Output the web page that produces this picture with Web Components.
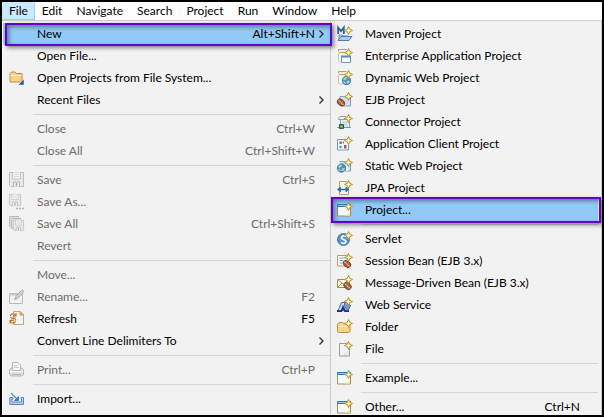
<!DOCTYPE html>
<html lang="en">
<head>
<meta charset="UTF-8">
<meta name="viewport" content="width=device-width, initial-scale=1">
<title>File menu</title>
<style>
    body {
        margin: 0;
        font-family: Lato, "Open Sans", sans-serif;
        font-size: 12px;
        line-height: 18px;
        color: #000;
    }
</style>
</head>
<body>
<app-frame>
    <menu-bar slot="bar">
        <menu-tab active>File</menu-tab>
        <menu-tab>Edit</menu-tab>
        <menu-tab>Navigate</menu-tab>
        <menu-tab>Search</menu-tab>
        <menu-tab>Project</menu-tab>
        <menu-tab>Run</menu-tab>
        <menu-tab>Window</menu-tab>
        <menu-tab>Help</menu-tab>
    </menu-bar>

    <menu-panel>
        <menu-entry keys="Alt+Shift+N" submenu marked>New</menu-entry>
        <menu-entry>Open File...</menu-entry>
        <menu-entry icon="openProject">Open Projects from File System...</menu-entry>
        <menu-entry submenu>Recent Files</menu-entry>
        <menu-divider></menu-divider>
        <menu-entry keys="Ctrl+W" disabled>Close</menu-entry>
        <menu-entry keys="Ctrl+Shift+W" disabled>Close All</menu-entry>
        <menu-divider></menu-divider>
        <menu-entry icon="save" keys="Ctrl+S" disabled>Save</menu-entry>
        <menu-entry icon="saveAs" disabled>Save As...</menu-entry>
        <menu-entry icon="saveAll" keys="Ctrl+Shift+S" disabled>Save All</menu-entry>
        <menu-entry disabled>Revert</menu-entry>
        <menu-divider></menu-divider>
        <menu-entry disabled>Move...</menu-entry>
        <menu-entry icon="rename" keys="F2" disabled>Rename...</menu-entry>
        <menu-entry icon="refresh" keys="F5">Refresh</menu-entry>
        <menu-entry submenu>Convert Line Delimiters To</menu-entry>
        <menu-divider></menu-divider>
        <menu-entry icon="print" keys="Ctrl+P" disabled>Print...</menu-entry>
        <menu-divider></menu-divider>
        <menu-entry icon="import">Import...</menu-entry>
    </menu-panel>

    <menu-panel nested>
        <menu-entry icon="maven">Maven Project</menu-entry>
        <menu-entry icon="enterprise">Enterprise Application Project</menu-entry>
        <menu-entry icon="dynamicWeb">Dynamic Web Project</menu-entry>
        <menu-entry icon="ejb">EJB Project</menu-entry>
        <menu-entry icon="connector">Connector Project</menu-entry>
        <menu-entry icon="appClient">Application Client Project</menu-entry>
        <menu-entry icon="staticWeb">Static Web Project</menu-entry>
        <menu-entry icon="jpa">JPA Project</menu-entry>
        <menu-entry icon="wizard" marked>Project...</menu-entry>
        <menu-divider></menu-divider>
        <menu-entry icon="servlet">Servlet</menu-entry>
        <menu-entry icon="sessionBean">Session Bean (EJB 3.x)</menu-entry>
        <menu-entry icon="messageBean">Message-Driven Bean (EJB 3.x)</menu-entry>
        <menu-entry icon="webService">Web Service</menu-entry>
        <menu-entry icon="folder">Folder</menu-entry>
        <menu-entry icon="file">File</menu-entry>
        <menu-divider></menu-divider>
        <menu-entry icon="wizard">Example...</menu-entry>
        <menu-divider></menu-divider>
        <menu-entry icon="wizard" keys="Ctrl+N">Other...</menu-entry>
    </menu-panel>
</app-frame>

<script>
// ============================================
// Icons, all on a 16x16 grid
// ============================================

// gold sparkle in the top right corner of every "new" icon
const spark = `
    <path d="M11.5 .8 12.8 3.2 15.2 4.5 12.8 5.8 11.5 8.2 10.2 5.8 7.8 4.5 10.2 3.2Z" fill="#fffbe0" stroke="#c2982f" stroke-width="1.1"/>`;

const bean = (x, y) => `
    <g transform="translate(${x} ${y})">
        <ellipse cx="4" cy="4" rx="4.2" ry="3" transform="rotate(40 4 4)" fill="#a5633a" stroke="#6b3518" stroke-width=".8"/>
        <path d="M1.2 1.8C4 2 3.5 5.5 6.8 6.3" stroke="#f0c9a0" fill="none"/>
    </g>`;

const globe = (x, y) => `
    <g transform="translate(${x} ${y})">
        <circle cx="4.5" cy="4.5" r="4.2" fill="#4f91cc" stroke="#3b6fa8" stroke-width=".8"/>
        <path d="M1 3C2.5 .8 4 .6 5 1.2L4.5 3 2.5 4.5ZM5 4.5l3 .5-1.5 2.8L4.5 7Z" fill="#a5dba0"/>
        <path d="M1.5 5.5l2 2" stroke="#e8f6ff"/>
    </g>`;

const floppy = `
    <path d="M.5 .5h14v14H2L.5 13Z" fill="#e9e9e9" stroke="#bdbdbd"/>
    <path d="M3.5 .5v6.5h8V.5" fill="#f5f5f5" stroke="#c3c3c3"/>
    <path d="M5 2.5h5M5 4.5h5" stroke="#d8d8d8"/>
    <path d="M4.5 14.5V10h6v4.5" fill="#f3f3f3" stroke="#b5b5b5"/>
    <path d="M7.5 11v3" stroke="#a9a9a9" stroke-width="1.6"/>`;

// pale project box with a gold lid
const jar = `
    <path d="M2.5 4.5 1.5 6V13L2.5 14H12V5Z" fill="#f6f7f7" stroke="#c9c3ae"/>
    <path d="M1.5 3.5V1.5H9.5M2.5 4.5h6" fill="none" stroke="#bf9d4c"/>`;

const icons = {
    openProject: `
        <path d="M1 12V3.5L2.5 2H6l1.5 1.5h5.5V12Z" fill="#f6d28f" stroke="#c18a3c"/>
        <path d="M1.5 5.5h11" stroke="#fff0c6"/>
        <path d="M15 9v6H9Z" fill="#1c5c9c" stroke="#fff" stroke-width=".5"/>`,
    save: floppy,
    saveAs: `
        <g transform="scale(.8)">${floppy}</g>
        <path d="M7 14.5h2M10 14.5h2M13 14.5h2" stroke="#b5b5b5" stroke-width="1.5"/>`,
    saveAll: `
        <path d="M.5 11V.5H10M2.5 13V2.5H12" fill="none" stroke="#bcbcbc"/>
        <path d="M1.5 12V1.5H11M3.5 14V3.5H13" fill="none" stroke="#dedede"/>
        <g transform="translate(4 4) scale(.73)">${floppy}</g>`,
    rename: `
        <path d="M.5 4.5h13v10H.5Z" fill="#f1f1f1" stroke="#b9b9b9"/>
        <path d="M.5 5.5h13" stroke="#c9c9c9" stroke-width="2"/>
        <path d="M5.5 10.5 7 7.5 13 .8 15 2.5 8.5 9.5Z" fill="#d6d6d6" stroke="#a9a9a9"/>`,
    refresh: `
        <path d="M4.5 .5H11L14.5 4v9.500H4.5Z" fill="#f0f4fb" stroke="#bda87a"/>
        <path d="M11 .5V4h3.5Z" fill="#e6c779" stroke="#bda05b"/>
        <path d="M1.5 5C1.5 2 5.5 2 6.5 4.5M7 2v3H4M6.5 9.5C6 13 2 13 1.5 10M1 12.5v-3h3.5M1.5 6c1 1.8 4 1.8 5 .5M2 8.5c1-1.5 4-1.5 5 .5" fill="none" stroke="#b9761d" stroke-width="1.1"/>`,
    print: `
        <path d="M.5 7.5 2 6h11l1.5 1.5v5L13 14H2L.5 12.5Z" fill="#dedede" stroke="#bababa"/>
        <path d="M3.5 8.5V.5H9L11.5 3v5.5Z" fill="#f7f7f7" stroke="#b9b9b9"/>
        <path d="M5 3.5h4M5 5.5h5" stroke="#c9c9c9"/>
        <path d="M1 9.5h13" stroke="#f7f7f7"/>
        <path d="M3 12.5h9" stroke="#b5b5b5"/>`,
    import: `
        <path d="M4 6.5H.8v7h13.7v-7H12V8h.5v3H2.8V8H4Z" fill="#b9d0ec" stroke="#5f84b8"/>
        <path d="M2 2 8.5 8.5" stroke="#4a93ce" stroke-width="1.2"/>
        <path d="M9.5 5.5v4h-4Z" fill="#3684c2" stroke="#3684c2"/>`,
    maven: `
        <path d="M1.2 8V1.5L4 5 6.8 1.5V8" fill="none" stroke="#285f9e" stroke-width="1.8"/>
        <path d="M2 14.5V9h3l1 1h5v4.5Z" fill="#d9e8f8" stroke="#5f86bb"/>
        <path d="M1 14.5 4 10.5h11l-3 4Z" fill="#a9cdf1" stroke="#4e7ab4"/>
        ${spark}`,
    enterprise: `
        ${jar}
        <path d="M4.5 8.5h9v6h-9Z" fill="#fff" stroke="#6d9ac5"/>
        <path d="M4 8.5h10" stroke="#4d8cc5" stroke-width="2"/>
        ${spark}`,
    dynamicWeb: `${jar}${globe(5, 6)}${spark}`,
    ejb: `
        <path d="M3 4.5h5l1 1.5h4.5v8H6L3 9Z" fill="#d3e3f3" stroke="#7fa3c5"/>
        ${bean(0, 6.5)}${spark}`,
    connector: `
        <path d="M1.5 4.5 3 2.5h6M1 5.5h12M3.5 6v8M12.5 6v8" fill="none" stroke="#8a9cab"/>
        <path d="M5 7h6v6H5Z" fill="#d2dfea"/>
        <path d="M0 13.5h14" stroke="#85949f"/>
        <path d="M2.5 10.5h4v4h-4Z" fill="#4aa35b" stroke="#28633a"/>
        <path d="M4 12.5h1" stroke="#bfe6c3"/>
        ${spark}`,
    appClient: `
        <path d="M.5 3.5h11v10.500H.5Z" fill="#f4f9ff" stroke="#6b9bc4"/>
        <path d="M2.5 5.5h2.5v2.5h-2.5Z" fill="#cc5c4e"/>
        <path d="M7 9h2.5v3.5H7Z" fill="#d14a4a"/>
        <path d="M3 12V10l1.5 1Z" fill="#3a9b51" stroke="#3a9b51"/>
        <path d="M6.5 5.5v2" stroke="#417bb8" stroke-width="1.3"/>
        ${spark}`,
    staticWeb: `
        <path d="M2.5 3.5h5l1 1.5h5v8H8" fill="#d1e2f2" stroke="#7d9fc2"/>
        <path d="M10 8v5" stroke="#f4f8fc" stroke-width="2"/>
        ${globe(0, 5.5)}${spark}`,
    jpa: `
        <path d="M2.5 1.5h7L11.5 5v9.500h-9Z" fill="#f8f8fb" stroke="#b6a56f"/>
        <path d="M2 9.5h9" stroke="#2c64a5" stroke-width="1.5"/>
        <path d="M3.5 7v5L.5 9.5ZM9 7v5l3-2.5Z" fill="#3974b3" stroke="#285b95" stroke-width=".7"/>
        ${spark}`,
    wizard: `
        <path d="M.5 3.5h13v10.500H.5Z" fill="#f3faff" stroke="#a58f56"/>
        <path d="M0 3.500h14" stroke="#2f7fc4" stroke-width="3"/>
        <path d="M1 3.5h8" stroke="#8dc4ef"/>
        <path d="M13 7c0 4-3 6.5-7 6.5h7Z" fill="#fbedb0"/>
        ${spark}`,
    servlet: `
        <circle cx="6.5" cy="8.5" r="6" fill="#5b95cb" stroke="#3f77b0"/>
        <path d="M9 5.5C7 4 4 5 4.5 7S9 8.5 9 10.5 5.5 13 4 11.5" fill="none" stroke="#fff" stroke-width="1.7"/>
        ${spark}`,
    sessionBean: `
        <path d="M.5 2.5h11V13H.5Z" fill="#f8fafd" stroke="#b7a264"/>
        <path d="M2.5 5h5M2.5 7.5h4M2.5 10h3" stroke="#7fa5d1"/>
        ${bean(6, 7)}${spark}`,
    messageBean: `
        <path d="M.5 4.5h12v8H.5Z" fill="#fffdf2" stroke="#aa8840"/>
        <path d="M.5 4.5 6.5 9 12 4.5M.5 12.5 5 8" fill="none" stroke="#b9974f"/>
        ${bean(6.5, 7)}${spark}`,
    webService: `
        <path d="M4.5 5.5h3L11 13.5H1Z" fill="#d6e5f2" stroke="#526f9c"/>
        <path d="M0 14h4.5l1.5-4 2 4h4" fill="none" stroke="#20328d" stroke-width="1.8"/>
        <path d="M8 4 7 9.5l4 4 2.5-5Z" fill="#7c9bcf" stroke="#4964a8"/>
        <path d="M4 6.5 3 10" stroke="#5e8fc2"/>
        ${spark}`,
    folder: `
        <path d="M.5 12.5v-7L2 3.5h4L7.5 5h5.5v7.5L12 13.5H1.5Z" fill="#f9d390" stroke="#c78b3b"/>
        <path d="M1.5 7.5h11" stroke="#fff0c2"/>
        ${spark}`,
    file: `
        <path d="M2.5 2.5h8l2 2v10.5h-10Z" fill="#f0f5fd" stroke="#a79b77"/>
        <path d="M11.5 8v6H6Z" fill="#dce8f8"/>
        ${spark}`
};

// ============================================
// Frame: black outline, bar on top, panels below
// ============================================
class AppFrame extends HTMLElement {
    constructor() {
        super();
        this.attachShadow({ mode: 'open' });
    }

    connectedCallback() {
        this.shadowRoot.innerHTML = `
            <style>
                :host {
                    display: flex;
                    flex-direction: column;
                    box-sizing: border-box;
                    height: 100vh;
                    border: 2px solid #000;
                    background: #f2f2f2;
                    overflow: hidden;
                }
                .panels {
                    display: grid;
                    grid-template-columns: 328px 1fr;
                    flex: 1;
                    min-height: 0;
                    border-top: 1px solid #ccc;
                    border-right: 1px solid #ccc;
                }
            </style>
            <slot name="bar"></slot>
            <div class="panels"><slot></slot></div>
        `;
    }
}

class MenuBar extends HTMLElement {
    constructor() {
        super();
        this.attachShadow({ mode: 'open' });
    }

    connectedCallback() {
        this.shadowRoot.innerHTML = `
            <style>
                :host {
                    display: block;
                    background: #fff;
                }
                nav {
                    display: flex;
                }
            </style>
            <nav aria-label="Main menu"><slot></slot></nav>
        `;
    }
}

class MenuTab extends HTMLElement {
    constructor() {
        super();
        this.attachShadow({ mode: 'open' });
    }

    connectedCallback() {
        this.shadowRoot.innerHTML = `
            <style>
                :host {
                    display: block;
                }
                button {
                    display: block;
                    height: 18px;
                    padding: 0 7px;
                    border: 0;
                    background: none;
                    font: inherit;
                    color: inherit;
                }
                :host([active]) button {
                    background: #cce8ff;
                    box-shadow: inset -1px -1px #99d1ff;
                }
            </style>
            <button type="button"><slot></slot></button>
        `;
    }
}

// ============================================
// Panel and its rows
// ============================================
class MenuPanel extends HTMLElement {
    constructor() {
        super();
        this.attachShadow({ mode: 'open' });
    }

    connectedCallback() {
        this.shadowRoot.innerHTML = `
            <style>
                :host {
                    display: block;
                    min-width: 0;
                    padding-top: 2px;
                    border-left: 1px solid #fff;
                    --keys-end: 15px;
                    --mark-inset: 0 -2px -1px 2px;
                }
                :host([nested]) {
                    padding-right: 3px;
                    border-left-color: #ccc;
                    --keys-end: 18px;
                    --mark-inset: -2px -3px -2px 0;
                }
            </style>
            <slot></slot>
        `;
    }
}

class MenuEntry extends HTMLElement {
    constructor() {
        super();
        this.attachShadow({ mode: 'open' });
    }

    connectedCallback() {
        const icon = icons[this.getAttribute('icon')];
        const keys = this.getAttribute('keys');

        this.shadowRoot.innerHTML = `
            <style>
                :host {
                    display: block;
                    position: relative;
                }
                :host([marked]) {
                    z-index: 1;
                }
                button {
                    display: grid;
                    grid-template-columns: 30px 1fr auto var(--keys-end);
                    align-items: center;
                    width: 100%;
                    height: 22px;
                    padding: 0;
                    border: 0;
                    background: none;
                    font: inherit;
                    color: inherit;
                    text-align: left;
                    white-space: nowrap;
                }
                button:disabled {
                    color: #6d6d6d;
                }
                :host([marked]) button {
                    background: #91c9f7;
                }
                .icon {
                    width: 16px;
                    height: 16px;
                    margin-left: 6px;
                    fill: none;
                    overflow: visible;
                }
                .label {
                    grid-column: 2;
                    padding-left: 4px;
                }
                .keys {
                    grid-column: 3;
                }
                .arrow {
                    grid-column: 4;
                    width: 5px;
                    height: 8px;
                    margin-left: 4px;
                    fill: none;
                    stroke: #333;
                    stroke-width: 1.4;
                }
                .mark {
                    position: absolute;
                    inset: var(--mark-inset);
                    border: 2px solid #6600cc;
                    box-shadow: 2px 2px 4px rgba(0, 0, 0, 0.45), inset 2px 2px 4px rgba(0, 0, 0, 0.4);
                    pointer-events: none;
                }
            </style>
            <button type="button" ${this.hasAttribute('disabled') ? 'disabled' : ''}>
                ${icon ? `<svg class="icon" viewBox="0 0 16 16" aria-hidden="true">${icon}</svg>` : ''}
                <span class="label"><slot></slot></span>
                ${keys ? `<span class="keys">${keys}</span>` : ''}
                ${this.hasAttribute('submenu') ? '<svg class="arrow" viewBox="0 0 5 8" aria-hidden="true"><path d="M.5 .5 4 4 .5 7.5"/></svg>' : ''}
            </button>
            ${this.hasAttribute('marked') ? '<div class="mark"></div>' : ''}
        `;
    }
}

class MenuDivider extends HTMLElement {
    constructor() {
        super();
        this.attachShadow({ mode: 'open' });
    }

    connectedCallback() {
        this.shadowRoot.innerHTML = `
            <style>
                :host {
                    display: block;
                    padding: 3px 0 3px 30px;
                }
                hr {
                    height: 1px;
                    margin: 0;
                    border: 0;
                    background: #d5d5d5;
                }
            </style>
            <hr>
        `;
    }
}

customElements.define('app-frame', AppFrame);
customElements.define('menu-bar', MenuBar);
customElements.define('menu-tab', MenuTab);
customElements.define('menu-panel', MenuPanel);
customElements.define('menu-entry', MenuEntry);
customElements.define('menu-divider', MenuDivider);
</script>
</body>
</html>
